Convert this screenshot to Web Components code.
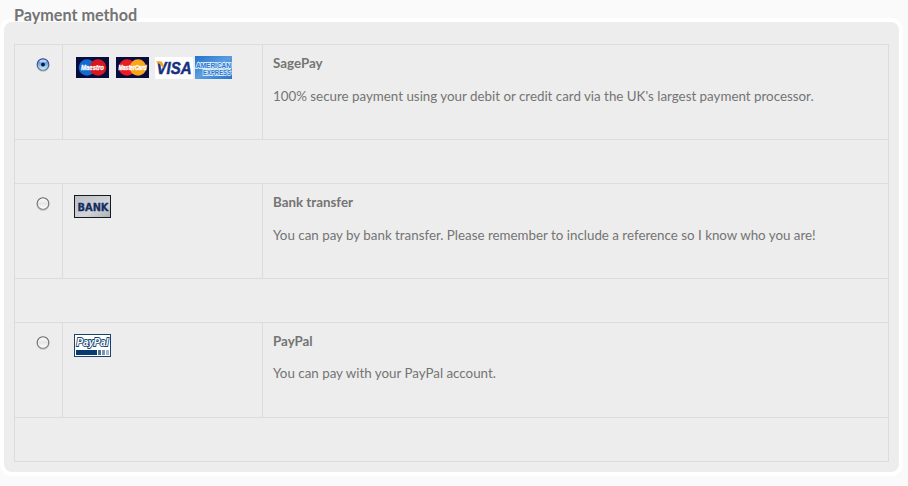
<!DOCTYPE html>
<html lang="en"><head><meta charset="utf-8"><title>Payment method</title>
<style>
html,body{margin:0;height:486px;overflow:hidden;background:#fafafa}
body{font-family:Lato,"Open Sans",sans-serif;font-size:13.35px;color:#747474}
</style></head><body>
<payment-panel>
<span slot="title">Payment method</span>
<payment-option checked><card-icon slot="icons" kind="maestro"></card-icon><card-icon slot="icons" kind="mastercard"></card-icon><card-icon slot="icons" kind="visa"></card-icon><card-icon slot="icons" kind="amex"></card-icon><span slot="name">SagePay</span><span slot="text">100% secure payment using your debit or credit card via the UK's largest payment processor.</span></payment-option>
<payment-option><card-icon slot="icons" kind="bank"></card-icon><span slot="name">Bank transfer</span><span slot="text">You can pay by bank transfer. Please remember to include a reference so I know who you are!</span></payment-option>
<payment-option style="--gap:12px"><card-icon slot="icons" kind="paypal"></card-icon><span slot="name">PayPal</span><span slot="text">You can pay with your PayPal account.</span></payment-option>
</payment-panel>
<script>
class PaymentPanel extends HTMLElement{
  constructor(){super();this.attachShadow({mode:'open'}).innerHTML=`<style>
:host{display:block}
h2{position:relative;z-index:1;box-sizing:border-box;width:124px;height:22px;margin:0 0 -4px 14px;padding-top:5px;background:#fafafa;font-size:16.2px;line-height:20px;font-weight:700;white-space:nowrap}
section{box-sizing:border-box;width:903px;height:458px;border:4px solid #fff;border-radius:12px;background:#ededed;padding:22px 10px 10px}
.table{border:1px solid #dcdcdc;border-top:0}
</style><h2><slot name="title"></slot></h2><section><div class="table"><slot></slot></div></section>`}
}
class RadioDot extends HTMLElement{
  constructor(){super();this.attachShadow({mode:'open'})}
  connectedCallback(){const on=this.hasAttribute('checked');this.shadowRoot.innerHTML=`<style>:host{display:block;width:15px;height:16px}svg{display:block}</style>
<svg width="15" height="16" viewBox="0 0 15 16"><defs><linearGradient id="f" x2="0" y2="1">${on?'<stop stop-color="#6a94d8"/><stop offset=".45" stop-color="#6fa9e8"/><stop offset="1" stop-color="#d5faff"/>':'<stop stop-color="#fff"/><stop offset=".5" stop-color="#e6e6e6"/><stop offset="1" stop-color="#fff"/>'}</linearGradient><linearGradient id="s" x2="0" y2="1"><stop stop-color="${on?'#223a94':'#666'}"/><stop offset="1" stop-color="${on?'#5c7793':'#858585'}"/></linearGradient></defs>
<ellipse cx="7" cy="8.4" rx="6.6" ry="6.6" fill="#000" opacity=".15"/><circle cx="7" cy="7.5" r="5.8" fill="url(#f)" stroke="url(#s)" stroke-width="1.1"/>${on?'<ellipse cx="7" cy="4" rx="3.6" ry="1.6" fill="#fff" opacity=".5"/><circle cx="7" cy="7.5" r="2" fill="#10182c"/>':''}</svg>`}
}
class PaymentOption extends HTMLElement{
  constructor(){super();this.attachShadow({mode:'open'})}
  connectedCallback(){this.shadowRoot.innerHTML=`<style>
:host{display:block}
.row{display:grid;grid-template-columns:48px 200px 1fr;height:94px;border-top:1px solid #dcdcdc}
.row>div{box-sizing:border-box}
.radio{padding:12px 0 0 21px;border-right:1px solid #dcdcdc}
.icons{display:flex;align-items:flex-start;padding:11px 0 0 11px;border-right:1px solid #dcdcdc}
.copy{padding:8px 0 0 10px;white-space:nowrap;line-height:20px}
h3{margin:0;font-size:inherit;font-weight:700}
p{margin:var(--gap,13px) 0 0}
.spacer{height:43px;border-top:1px solid #dcdcdc}
</style><div class="row"><div class="radio"><radio-dot ${this.hasAttribute('checked')?'checked':''}></radio-dot></div><div class="icons"><slot name="icons"></slot></div><div class="copy"><h3><slot name="name"></slot></h3><p><slot name="text"></slot></p></div></div><div class="spacer"></div>`}
}
const art={
maestro:[41,'<rect x="2" y="1" width="33" height="21" fill="#060d3c"/><circle cx="13" cy="11.5" r="8.3" fill="#1769d2"/><circle cx="24" cy="11.5" r="8.3" fill="#d9171f"/><text x="7" y="14" font-size="7" stroke="#fff" stroke-width=".3" textLength="23" lengthAdjust="spacingAndGlyphs">Maestro</text>'],
mastercard:[40,'<rect x="1" y="1" width="33" height="21" fill="#060d3c"/><circle cx="12" cy="11.5" r="8.3" fill="#e91b23"/><circle cx="23" cy="11.5" r="8.3" fill="#fba51b"/><text x="3.5" y="14" font-size="7" stroke="#fff" stroke-width=".4" textLength="28" lengthAdjust="spacingAndGlyphs">MasterCard</text>'],
visa:[40,'<rect x="0" y="1" width="38" height="22" fill="#fff"/><text x="1.5" y="17.5" font-size="16.5" stroke="#18317e" stroke-width=".5" textLength="35" lengthAdjust="spacingAndGlyphs" style="fill:#18317e">VISA</text><path d="M1 5.5h5q1.4 0 1.7 1.4l1 5Q6 8 1 6z" fill="#f4a51c"/>'],
amex:[37,'<defs><linearGradient id="a" x2="1" y2="1"><stop stop-color="#2272cc"/><stop offset=".5" stop-color="#5b9de0"/><stop offset="1" stop-color="#2a74cb"/></linearGradient></defs><rect width="37" height="23" fill="url(#a)"/><g font-size="7" fill="#2d78c8" stroke="#d6eafc" stroke-width="1.8" paint-order="stroke"><text x="1" y="11.5" textLength="35" lengthAdjust="spacingAndGlyphs" class="i">AMERICAN</text><text x="8" y="19" textLength="28" lengthAdjust="spacingAndGlyphs" class="i">EXPRESS</text></g>'],
bank:[37,'<defs><linearGradient id="b" x2="1" y2="1"><stop stop-color="#b9bfc5"/><stop offset=".6" stop-color="#d3d5d7"/><stop offset="1" stop-color="#a9afb5"/></linearGradient></defs><rect x=".5" y=".5" width="36" height="22" fill="url(#b)" stroke="#161b22"/><text x="3.5" y="15.5" font-size="10" stroke="#142d62" stroke-width=".3" textLength="31" lengthAdjust="spacingAndGlyphs" style="fill:#142d62;font-family:DejaVu Sans;font-style:normal">BANK</text>'],
paypal:[37,'<rect x=".5" y=".5" width="36" height="22" fill="#fff" stroke="#1b426e"/><text x="2.5" y="12" font-size="10.5" textLength="32" lengthAdjust="spacingAndGlyphs" style="fill:#fff;stroke:#16456f;stroke-width:1.8;paint-order:stroke">PayPal</text><path d="M2 16h21v5H2z" fill="#073b70"/><path d="M24 16h3v5h-3z" fill="#486e94"/><path d="M28 16h3v5h-3z" fill="#7895b0"/><path d="M32 16h3v5h-3z" fill="#a6b8c9"/>']};
class CardIcon extends HTMLElement{
  constructor(){super();this.attachShadow({mode:'open'})}
  connectedCallback(){const [w,g]=art[this.getAttribute('kind')];this.shadowRoot.innerHTML=`<style>:host{display:block;flex:none}svg{display:block;overflow:visible}text{font-family:"Liberation Sans",sans-serif;font-weight:700;font-style:italic;fill:#fff}text.i{fill:inherit;font-style:normal}</style><svg width="${w}" height="24" viewBox="0 0 ${w} 24">${g}</svg>`}
}
customElements.define('payment-panel',PaymentPanel);customElements.define('radio-dot',RadioDot);customElements.define('payment-option',PaymentOption);customElements.define('card-icon',CardIcon);
</script></body></html>
